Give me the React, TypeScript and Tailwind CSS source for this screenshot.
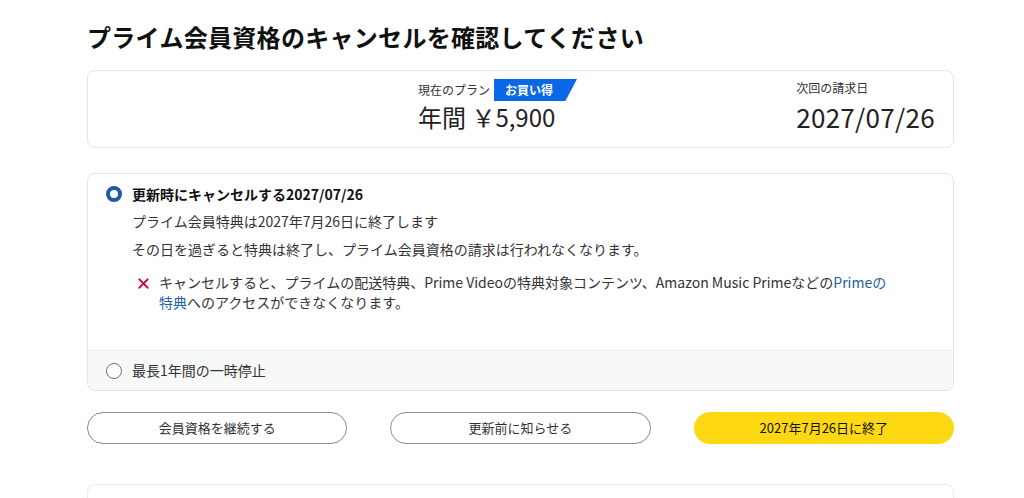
import { X } from "lucide-react";

export default function App() {
  return (
    <div
      className="h-[498px] w-[1024px] bg-white text-[#0f1111] overflow-hidden"
      style={{ fontFamily: '"Noto Sans CJK JP", "Noto Sans", sans-serif' }}
    >
      <div className="ml-[87px] w-[867px] pt-[20px]">
        {/* Title */}
        <h1 className="text-[24px] font-bold leading-[34px] tracking-[0.3px]">
          プライム会員資格のキャンセルを確認してください
        </h1>

        {/* Plan summary */}
        <div className="mt-[16px] h-[78px] rounded-[8px] border border-[#e3e6e6] flex">
          <div className="ml-[330px] pt-[8px]">
            <div className="flex items-center h-[22px]">
              <span className="text-[12px] leading-[16px] text-[#333]">現在のプラン</span>
              <span className="ml-[4px] h-[22px] w-[83px] bg-[#0a68e6] [clip-path:polygon(0_0,100%_0,86%_100%,0_100%)] text-white text-[12px] font-bold leading-[22px] pl-[11px]">
                お買い得
              </span>
            </div>
            <div className="text-[24px] leading-[30px] mt-[1px] text-[#222]">
              年間&nbsp;￥5,900
            </div>
          </div>
          <div className="ml-auto mr-[18px] pt-[8px]">
            <div className="text-[12px] leading-[18px] text-[#333]">次回の請求日</div>
            <div className="text-[26px] leading-[34px] mt-[3px] text-[#222] tracking-[0.3px]">2027/07/26</div>
          </div>
        </div>

        {/* Options */}
        <div className="mt-[25px] rounded-[8px] border border-[#e3e6e6] overflow-hidden">
          <div className="pt-[10px] pb-[38px] pl-[18px] pr-[20px]">
            <div className="flex items-center h-[20px]">
              <span className="w-[16px] h-[16px] rounded-full border-[4.5px] border-[#1e5aa8] bg-white" />
              <span className="ml-[10px] text-[14px] font-bold">更新時にキャンセルする2027/07/26</span>
            </div>
            <div className="ml-[26px] mt-[7px] text-[14px] leading-[20px] text-[#333]">
              プライム会員特典は2027年7月26日に終了します
            </div>
            <div className="ml-[26px] mt-[8px] text-[14px] leading-[20px] text-[#333]">
              その日を過ぎると特典は終了し、プライム会員資格の請求は行われなくなります。
            </div>
            <div className="ml-[29px] mt-[13px] flex">
              <X className="w-[17px] h-[17px] text-[#cc0c39] mt-[3px] shrink-0" strokeWidth={2.5} />
              <p className="ml-[7px] text-[14px] leading-[20px] text-[#333]">
                キャンセルすると、プライムの配送特典、Prime Videoの特典対象コンテンツ、Amazon Music Primeなどの
                <span className="text-[#2162a1]">
                  Primeの
                  <br />
                  特典
                </span>
                へのアクセスができなくなります。
              </p>
            </div>
          </div>
          <div className="h-[40px] bg-[#f7f8f8] border-t border-[#eaeded] flex items-center pl-[18px]">
            <span className="w-[16px] h-[16px] rounded-full border border-[#6f7373] bg-white" />
            <span className="ml-[10px] text-[14px] text-[#333]">最長1年間の一時停止</span>
          </div>
        </div>

        {/* Buttons */}
        <div className="mt-[21px] grid grid-cols-3 gap-[43px]">
          <button className="h-[32px] rounded-full border border-[#888c8c] bg-white text-[13px] text-[#333]">
            会員資格を継続する
          </button>
          <button className="h-[32px] rounded-full border border-[#888c8c] bg-white text-[13px] text-[#333]">
            更新前に知らせる
          </button>
          <button className="h-[32px] rounded-full bg-[#ffd814] text-[13px] text-[#0f1111]">
            2027年7月26日に終了
          </button>
        </div>

        {/* Next card (cut off) */}
        <div className="mt-[40px] h-[20px] rounded-t-[8px] border border-b-0 border-[#eaeded]" />
      </div>
    </div>
  );
}
